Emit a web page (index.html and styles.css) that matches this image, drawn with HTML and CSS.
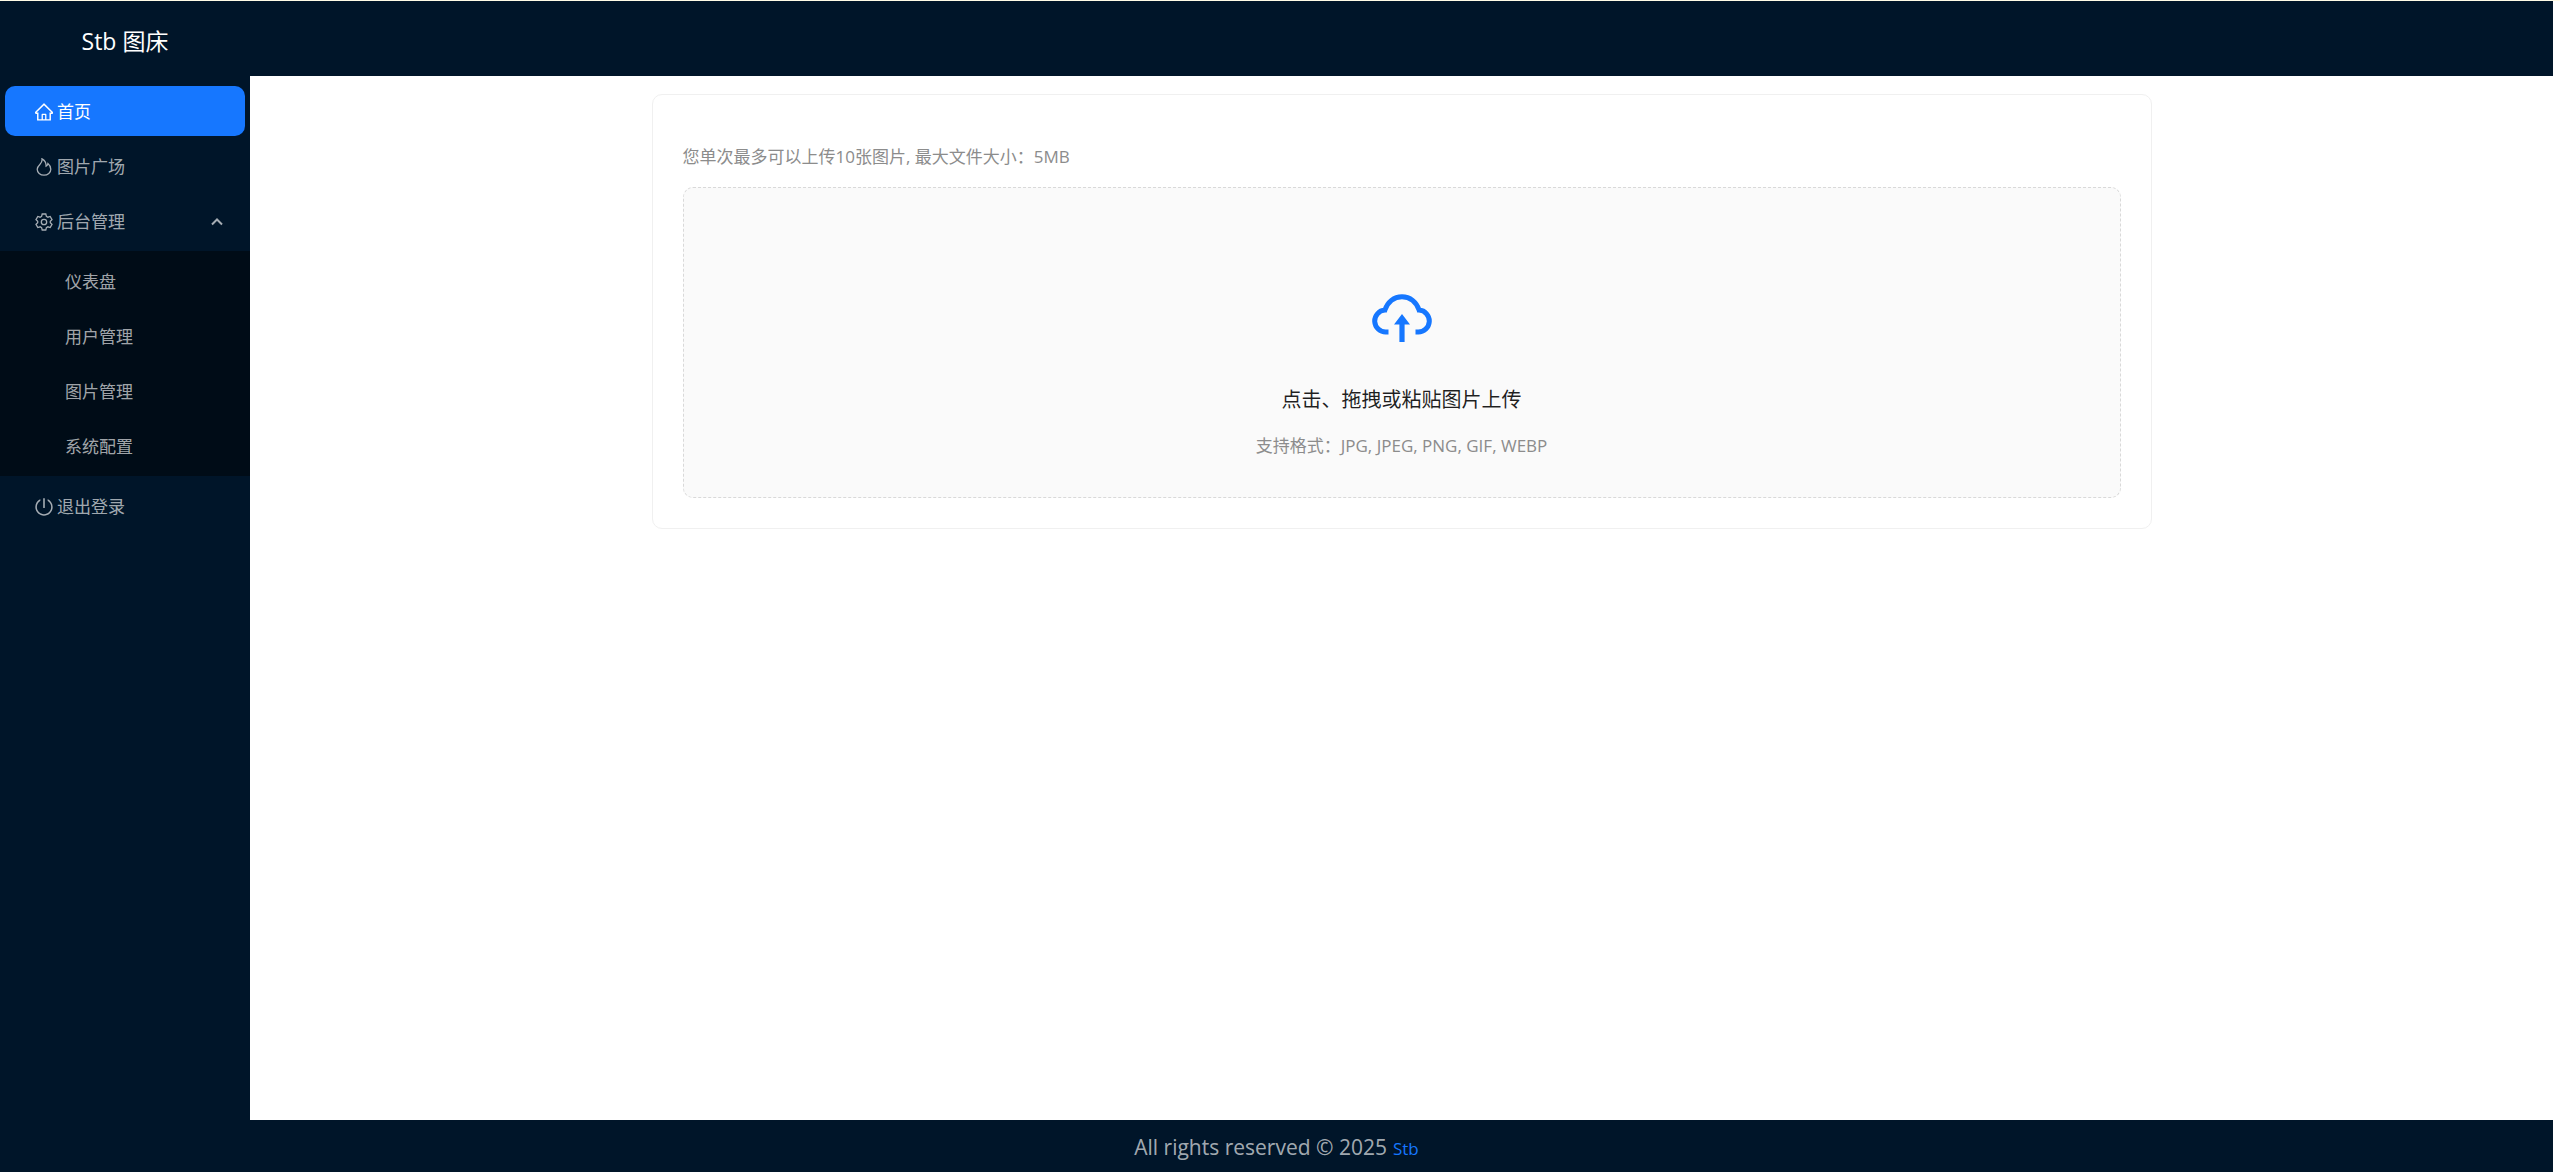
FILE: index.html
```html
<!DOCTYPE html>
<html lang="zh-CN">
<head>
  <meta charset="UTF-8">
  <meta name="viewport" content="width=device-width, initial-scale=1.0">
  <title>Stb 图床</title>
  <link rel="stylesheet" href="styles.css">
</head>
<body>

  <div class="layout">
    <header class="header">
      <h1 class="logo">Stb 图床</h1>
    </header>

    <div class="middle">
      <!-- Side menu -->
      <nav class="sider">
        <a class="menu-item active" href="#home">
          <svg class="icon" viewBox="64 64 896 896"><path d="M946.5 505L560.1 118.8l-25.9-25.9a31.5 31.5 0 00-44.4 0L77.5 505a63.9 63.9 0 00-18.8 46c.4 35.2 29.7 63.3 64.9 63.3h42.5V940h691.8V614.3h43.4c17.1 0 33.2-6.7 45.3-18.8a63.6 63.6 0 0018.7-45.3c0-17-6.7-33.1-18.8-45.2zM568 868H456V664h112v204zm217.9-325.7V868H632V640c0-22.1-17.9-40-40-40H432c-22.1 0-40 17.9-40 40v228H238.1V542.3h-96l370-369.7 23.1 23.1L882 542.3h-96.1z"/></svg>
          <span>首页</span>
        </a>
        <a class="menu-item" href="#square">
          <svg class="icon line" viewBox="0 0 18 18"><path d="M7 .8c.5 2.600-.6 4.300-2.300 6C3 8.500 2.200 9.700 2.200 11.200c0 3.300 3 5.900 6.800 5.900s6.800-2.600 6.800-5.900c0-2.300-1.200-4.200-2.900-5.600-.2 1.300-.8 2.100-1.800 2.600C11.200 5 9.700 2.200 7 .8z"/></svg>
          <span>图片广场</span>
        </a>
        <button class="menu-item" type="button" aria-expanded="true" aria-controls="adminMenu">
          <svg class="icon line" viewBox="0 0 18 18"><path d="M7.200 1h3.600l.6 2.300 1.500.9 2.300-.7L17 6.600l-1.700 1.600v1.600l1.700 1.600-1.800 3.100-2.300-.7-1.500.9-.6 2.300H7.200l-.6-2.300-1.500-.9-2.300.7L1 11.400l1.700-1.600V8.200L1 6.600l1.800-3.100 2.300.7 1.500-.9z"/><circle cx="9" cy="9" r="2.700"/></svg>
          <span>后台管理</span>
          <svg class="arrow" viewBox="0 0 12 12"><path d="M1 8.500l5-5 5 5"/></svg>
        </button>
        <div class="submenu" id="adminMenu">
          <a class="menu-item" href="#dashboard">仪表盘</a>
          <a class="menu-item" href="#users">用户管理</a>
          <a class="menu-item" href="#images">图片管理</a>
          <a class="menu-item" href="#config">系统配置</a>
        </div>
        <a class="menu-item" href="#logout">
          <svg class="icon" viewBox="64 64 896 896"><path d="M705.6 124.9a8 8 0 00-11.6 7.200v64.200c0 5.500 2.900 10.600 7.500 13.600a352.200 352.200 0 0162.200 49.800c32.700 32.800 58.400 70.900 76.300 113.300a355 355 0 0127.900 138.700c0 48.100-9.400 94.800-27.900 138.700a355.920 355.920 0 01-76.300 113.300 353.060 353.060 0 01-113.200 76.400c-43.800 18.600-90.500 28-138.500 28s-94.700-9.400-138.500-28a353.060 353.060 0 01-113.200-76.400A355.920 355.920 0 01184 650.400a355 355 0 01-27.900-138.700c0-48.100 9.400-94.800 27.900-138.700 17.900-42.400 43.600-80.500 76.300-113.300 19-19 39.800-35.600 62.200-49.800 4.700-2.900 7.500-8.100 7.500-13.600V132c0-6-6.300-9.800-11.600-7.200C178.500 195.200 82 339.300 80 506.300 77.200 745.100 272.500 943.500 511.200 944c239 .5 432.800-193.300 432.800-432.400 0-169.200-97-315.700-238.400-386.700zM480 560h64c4.400 0 8-3.600 8-8V88c0-4.400-3.600-8-8-8h-64c-4.400 0-8 3.600-8 8v464c0 4.400 3.600 8 8 8z"/></svg>
          <span>退出登录</span>
        </a>
      </nav>

      <!-- Upload -->
      <main class="content">
        <section class="card">
          <p class="tip">您单次最多可以上传10张图片, 最大文件大小：5MB</p>
          <button class="dragger" type="button">
            <svg class="upload-icon" viewBox="0 0 60 48"><path class="cloud" d="M16.500 38h-2.300A10.970 10.970 0 0 1 12.900 16.100C15.500 8 22 2.700 30 2.700s14.500 5.300 17.100 13.400A10.970 10.970 0 0 1 45.800 38h-2.300"/><path class="up" d="M30 20l8 10.500h-5.400V48h-5.200V30.500H22z"/></svg>
            <span class="upload-text">点击、拖拽或粘贴图片上传</span>
            <span class="upload-hint">支持格式：JPG, JPEG, PNG, GIF, WEBP</span>
          </button>
        </section>
      </main>
    </div>

    <footer class="footer">
      <span>All rights reserved © 2025</span>
      <a href="#stb">Stb</a>
    </footer>
  </div>

</body>
</html>
```
FILE: styles.css
```css
* {
  box-sizing: border-box;
  margin: 0;
  padding: 0;
}

body {
  min-height: 100vh;
  display: flex;
  flex-direction: column;
  border-top: 1px solid #fffbe6;
  background-color: #fff;
  font-family: "Open Sans", "Noto Sans CJK SC", sans-serif;
  font-size: 17px;
  line-height: 28px;
}

a {
  text-decoration: none;
}

button {
  border: none;
  background: none;
  font: inherit;
  cursor: pointer;
}

.layout {
  flex: 1;
  display: flex;
  flex-direction: column;
  margin-right: 7px;
}

/* Header */
.header {
  height: 75px;
  display: flex;
  align-items: center;
  background-color: #001529;
}

.logo {
  width: 250px;
  padding-top: 4px;
  text-align: center;
  color: #fff;
  font-size: 23px;
  font-weight: 400;
}

.middle {
  flex: 1;
  display: flex;
}

/* Side menu */
.sider {
  width: 250px;
  flex-shrink: 0;
  display: flex;
  flex-direction: column;
  gap: 5px;
  padding-top: 10px;
  background-color: #001529;
}

.menu-item {
  height: 50px;
  flex-shrink: 0;
  display: flex;
  align-items: center;
  gap: 4px;
  margin: 0 5px;
  padding: 2px 22px 0 30px;
  border-radius: 10px;
  color: rgba(255, 255, 255, 0.65);
}

.menu-item.active {
  background-color: #1677ff;
  color: #fff;
}

.icon {
  width: 18px;
  height: 18px;
  fill: currentColor;
}

.icon.line,
.arrow {
  fill: none;
  stroke: currentColor;
  stroke-width: 1.3;
}

.arrow {
  width: 12px;
  height: 12px;
  margin-left: auto;
  stroke-width: 2;
}

.submenu {
  display: flex;
  flex-direction: column;
  gap: 5px;
  padding: 5px 0;
  background-color: #000c17;
}

.submenu .menu-item {
  padding-left: 60px;
}

/* Content */
.content {
  flex: 1;
  padding: 18px 20px;
}

.card {
  max-width: 1500px;
  margin: 0 auto;
  padding: 48px 30px 30px;
  border: 1px solid #f0f0f0;
  border-radius: 10px;
}

.tip {
  margin-bottom: 16px;
  color: #8c8c8c;
}

.dragger {
  width: 100%;
  height: 311px;
  display: flex;
  flex-direction: column;
  align-items: center;
  padding-top: 106px;
  border: 1px dashed #d9d9d9;
  border-radius: 10px;
  background-color: #fafafa;
}

.upload-icon {
  width: 60px;
  height: 48px;
  margin-bottom: 44px;
}

.cloud {
  fill: none;
  stroke: #1677ff;
  stroke-width: 5;
}

.up {
  fill: #1677ff;
}

.upload-text {
  margin-bottom: 18px;
  color: rgba(0, 0, 0, 0.88);
  font-size: 20px;
}

.upload-hint {
  color: #8c8c8c;
}

/* Footer */
.footer {
  height: 52px;
  display: flex;
  justify-content: center;
  align-items: baseline;
  gap: 6px;
  padding-top: 13px;
  background-color: #001529;
  color: rgba(255, 255, 255, 0.65);
  font-size: 21px;
}

.footer a {
  color: #1677ff;
  font-size: 17px;
}
```
